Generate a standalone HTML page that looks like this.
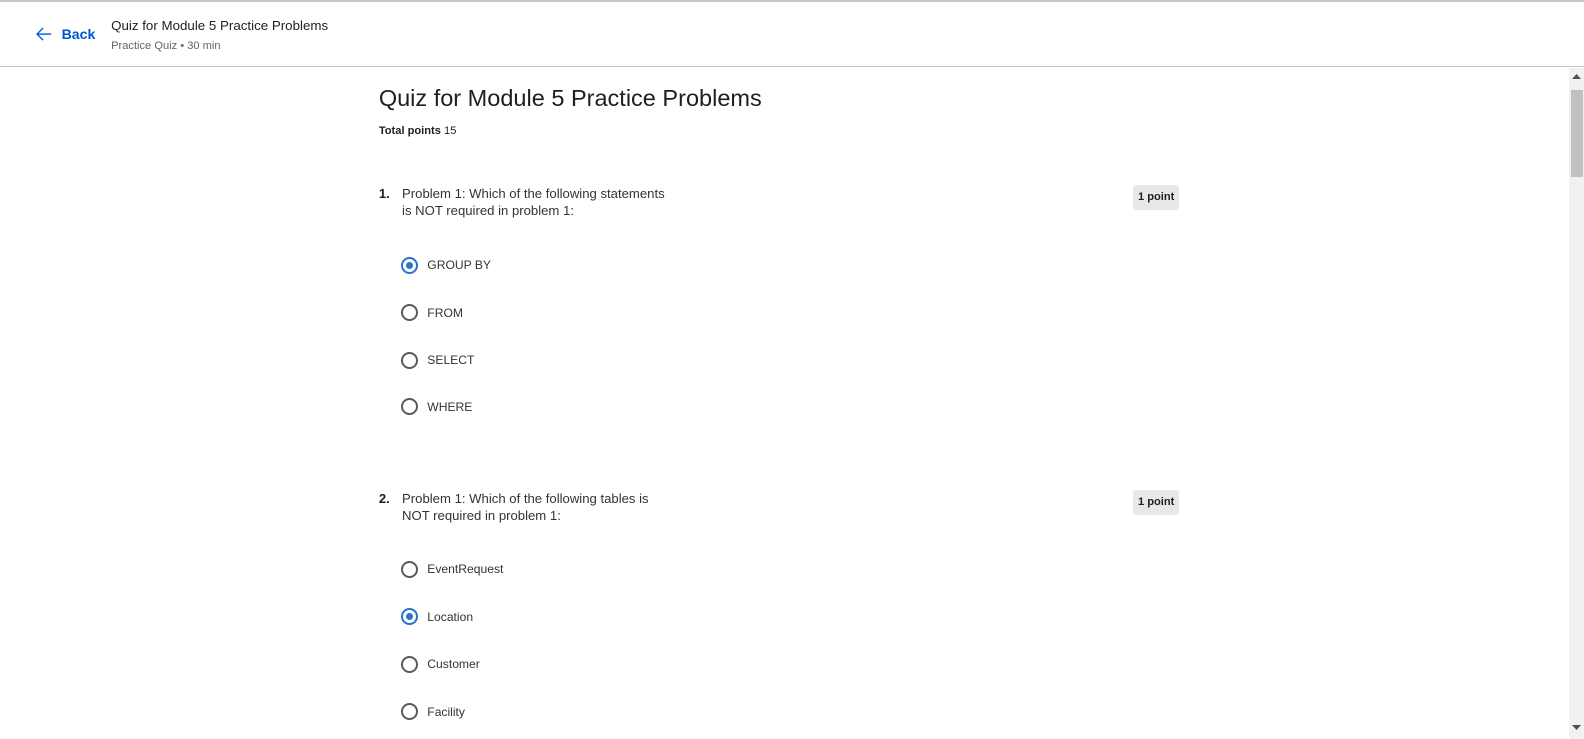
<!DOCTYPE html>
<html><head><style>
*{margin:0;padding:0;box-sizing:border-box}
body{width:1584px;height:739px;overflow:hidden;background:#fff;font-family:"Liberation Sans",sans-serif;color:#1f1f1f}
#w{position:relative;width:1568px;height:732px;zoom:1.0102}
.top{position:absolute;left:0;top:0;width:1568px;height:2px;background:#c8c8c8}
.hdr{position:absolute;left:0;top:2px;width:1568px;height:64px;border-bottom:1px solid #c4c4c4;background:#fff}
.back{position:absolute;left:36px;top:24px;color:#0056d2;font-weight:bold;font-size:14px;display:flex;align-items:center}
.back svg{margin-right:9px}
.ht{position:absolute;left:110px;top:16px;font-size:13.2px;color:#1f1f1f}
.hs{position:absolute;left:110px;top:38px;font-size:11px;color:#636363}
.sb{position:absolute;left:1553px;top:67px;width:15px;height:665px;background:#f1f1f1}
.thumb{position:absolute;left:1555px;top:89px;width:12px;height:86px;background:#c1c1c1}
h1{position:absolute;left:375px;top:84px;font-size:23.3px;font-weight:normal;color:#1f1f1f}
.tp{position:absolute;left:375px;top:124px;font-size:11px}
.q{position:absolute;left:375px;font-size:13px;line-height:17px;color:#333}
.q b{position:absolute;left:0;top:0;color:#1f1f1f}
.q span{position:absolute;left:23px;top:0;width:268px}
.pt{position:absolute;left:1122px;width:45px;height:25px;background:#e8e8e8;border-radius:3px;font-size:11px;font-weight:bold;text-align:center;line-height:25px;color:#1f1f1f}
.opt{position:absolute;left:397px;font-size:12px;color:#333;display:flex;align-items:center}
.r{width:17px;height:17px;border:2px solid #5a5a5a;border-radius:50%;margin-right:9px;position:relative}
.r.on{border-color:#2a73cc}
.r.on:after{content:"";position:absolute;left:3px;top:3px;width:7px;height:7px;border-radius:50%;background:#2a73cc}
</style></head><body><div id="w">
<div class="top"></div>
<div class="hdr">
<div class="back"><svg width="16" height="14" viewBox="0 0 16 14"><path d="M15 7H1M7 1L1 7l6 6" stroke="#0056d2" stroke-width="1.3" fill="none"/></svg>Back</div>
<div class="ht">Quiz for Module 5 Practice Problems</div>
<div class="hs">Practice Quiz • 30 min</div>
</div>
<div class="sb"><svg style="position:absolute;left:3px;top:5px" width="9" height="6"><path d="M0 6L4.5 1 9 6z" fill="#505050"/></svg><svg style="position:absolute;left:3px;top:651px" width="9" height="6"><path d="M0 0L4.5 5 9 0z" fill="#505050"/></svg></div>
<div class="thumb"></div>
<h1>Quiz for Module 5 Practice Problems</h1>
<div class="tp"><b>Total points</b> 15</div>

<div class="q" style="top:183px"><b>1.</b><span>Problem 1: Which of the following statements is NOT required in problem 1:</span></div>
<div class="pt" style="top:183px">1 point</div>
<div class="opt" style="top:254px"><div class="r on"></div>GROUP BY</div>
<div class="opt" style="top:301px"><div class="r"></div>FROM</div>
<div class="opt" style="top:348px"><div class="r"></div>SELECT</div>
<div class="opt" style="top:394px"><div class="r"></div>WHERE</div>

<div class="q" style="top:485px"><b>2.</b><span>Problem 1: Which of the following tables is NOT required in problem 1:</span></div>
<div class="pt" style="top:485px">1 point</div>
<div class="opt" style="top:555px"><div class="r"></div>EventRequest</div>
<div class="opt" style="top:602px"><div class="r on"></div>Location</div>
<div class="opt" style="top:649px"><div class="r"></div>Customer</div>
<div class="opt" style="top:696px"><div class="r"></div>Facility</div>
</div></body></html>
